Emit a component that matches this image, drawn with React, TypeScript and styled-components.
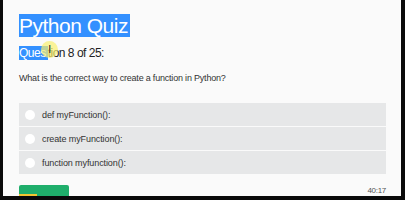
import styled, { createGlobalStyle } from 'styled-components';

const Global = createGlobalStyle`
  html, body {
    margin: 0;
    padding: 0;
    background: #0a0a0a;
  }
  body {
    font-family: "Liberation Sans", Arial, sans-serif;
  }
`;

const Frame = styled.div`
  width: 398px;
  height: 196px;
  margin-left: 3px;
  background: #fafafa;
  overflow: hidden;
  box-sizing: border-box;
  padding: 11px 15px 0 16px;
`;

const Title = styled.h1`
  margin: 0;
  font-size: 21px;
  font-weight: 400;
  letter-spacing: -0.5px;
  line-height: 29px;
  color: #222;
`;

const Selected = styled.span`
  background: #3390ff;
  color: #fff;
  padding-right: 2px;
`;

const Counter = styled.div`
  position: relative;
  margin-top: 5px;
  font-size: 12px;
  letter-spacing: -0.5px;
  line-height: 16px;
  color: #222;
`;

const Cursor = styled.span`
  position: absolute;
  left: 22px;
  top: -4px;
  width: 17px;
  height: 17px;
  border-radius: 50%;
  background: rgba(250, 240, 110, 0.7);
  display: flex;
  align-items: center;
  justify-content: center;
  font-size: 10px;
  color: #222;
  font-family: "DejaVu Sans", sans-serif;
`;

const Prompt = styled.p`
  margin: 11px 0 0;
  font-size: 9px;
  letter-spacing: -0.2px;
  line-height: 12px;
  color: #333;
`;

const Options = styled.div`
  margin-top: 19px;
  display: flex;
  flex-direction: column;
  gap: 1px;
`;

const Option = styled.label`
  display: flex;
  align-items: center;
  gap: 7px;
  height: 23px;
  padding-left: 6px;
  background: #e6e7e8;
  font-size: 9px;
  letter-spacing: -0.1px;
  color: #333;
`;

const Radio = styled.span`
  width: 10px;
  height: 10px;
  border-radius: 50%;
  background: #fff;
`;

const Footer = styled.div`
  margin-top: 11px;
  display: flex;
  justify-content: space-between;
  align-items: flex-start;
`;

const NextButton = styled.button`
  position: relative;
  width: 50px;
  height: 22px;
  border: none;
  border-radius: 2px;
  background: #1fae6b;
  color: #fff;
  font-family: inherit;
  font-size: 9px;
  line-height: 10px;
  padding: 8px 0 0 11px;
  text-align: left;
  overflow: hidden;
`;

const Highlight = styled.span`
  position: absolute;
  left: -2px;
  top: 9px;
  width: 20px;
  height: 4px;
  background: #f4c431;
`;

const Timer = styled.span`
  margin-top: 1px;
  font-size: 8px;
  letter-spacing: -0.3px;
  line-height: 10px;
  color: #555;
`;

export default function App() {
  return (
    <>
      <Global />
      <Frame>
        <Title>
          <Selected>Python Quiz</Selected>
        </Title>
        <Counter>
          <Selected>Ques</Selected>tion 8 of 25:
          <Cursor>I</Cursor>
        </Counter>
        <Prompt>What is the correct way to create a function in Python?</Prompt>
        <Options>
          <Option>
            <Radio />
            def myFunction():
          </Option>
          <Option>
            <Radio />
            create myFunction():
          </Option>
          <Option>
            <Radio />
            function myfunction():
          </Option>
        </Options>
        <Footer>
          <NextButton>
            <Highlight />
            Next &gt;
          </NextButton>
          <Timer>40:17</Timer>
        </Footer>
      </Frame>
    </>
  );
}
